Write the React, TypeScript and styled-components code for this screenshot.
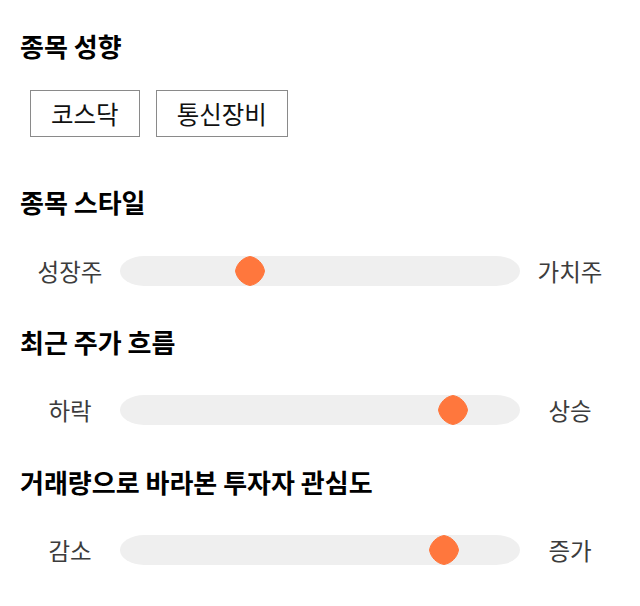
import React from 'react';
import styled, { createGlobalStyle } from 'styled-components';

const GlobalStyle = createGlobalStyle`
    html, body {
        margin: 0;
        padding: 0;
        background: #ffffff;
    }
    body {
        font-family: "Noto Sans CJK KR", "Noto Sans", sans-serif;
        color: #000000;
    }
`

const Page = styled.div`
    padding: 30px 20px 0;
    width: 600px;
`
const Section = styled.section<{ $gap: number }>`
    margin-bottom: ${(p) => p.$gap}px;
`
const Heading = styled.h2<{ $space: number }>`
    margin: 0 0 ${(p) => p.$space}px;
    font-size: 26px;
    line-height: 32px;
    font-weight: 700;
`
const TagList = styled.div`
    display: flex;
    gap: 16px;
    padding-left: 10px;
`
const Tag = styled.button`
    height: 47px;
    padding: 0 20px;
    border: 1px solid #8a8a8a;
    background: #ffffff;
    font-family: inherit;
    font-size: 24.5px;
    color: #111111;
    cursor: pointer;
`
const SliderRow = styled.div`
    display: grid;
    grid-template-columns: 100px 400px 100px;
    align-items: center;
    height: 30px;
`
const SideLabel = styled.span`
    text-align: center;
    font-size: 23.5px;
    line-height: 30px;
    color: #3c3c3c;
`
const Track = styled.div`
    position: relative;
    height: 30px;
    background: #efefef;
    border-radius: 24px / 15px;
`
const Thumb = styled.svg`
    position: absolute;
    top: 0;
    width: 30px;
    height: 30px;
`

interface SliderProps {
    left: string;
    right: string;
    value: number;
}

const Slider: React.FC<SliderProps> = ({ left, right, value }) => {
    const x = 370 * value;
    return (
        <SliderRow>
            <SideLabel>{left}</SideLabel>
            <Track role="slider" aria-valuenow={Math.round(value * 100)}>
                <Thumb viewBox="0 0 30 30" style={{ left: x }}>
                    <path
                        d="M15 0.5 C22.5 1.8 28.2 7.5 29.5 15 C28.2 22.5 22.5 28.2 15 29.5 C7.5 28.2 1.8 22.5 0.5 15 C1.8 7.5 7.5 1.8 15 0.5 Z"
                        fill="#ff773d"
                        stroke="#ff773d"
                        strokeWidth="1"
                        strokeLinejoin="round"
                    />
                </Thumb>
            </Track>
            <SideLabel>{right}</SideLabel>
        </SliderRow>
    );
};

const App: React.FC = () => {
    return (
        <Page>
            <GlobalStyle />
            <Section $gap={49}>
                <Heading $space={28}>종목 성향</Heading>
                <TagList>
                    <Tag>코스닥</Tag>
                    <Tag>통신장비</Tag>
                </TagList>
            </Section>
            <Section $gap={40}>
                <Heading $space={38}>종목 스타일</Heading>
                <Slider left="성장주" right="가치주" value={0.311} />
            </Section>
            <Section $gap={41}>
                <Heading $space={37}>최근 주가 흐름</Heading>
                <Slider left="하락" right="상승" value={0.86} />
            </Section>
            <Section $gap={0}>
                <Heading $space={37}>거래량으로 바라본 투자자 관심도</Heading>
                <Slider left="감소" right="증가" value={0.835} />
            </Section>
        </Page>
    );
};

export default App;
